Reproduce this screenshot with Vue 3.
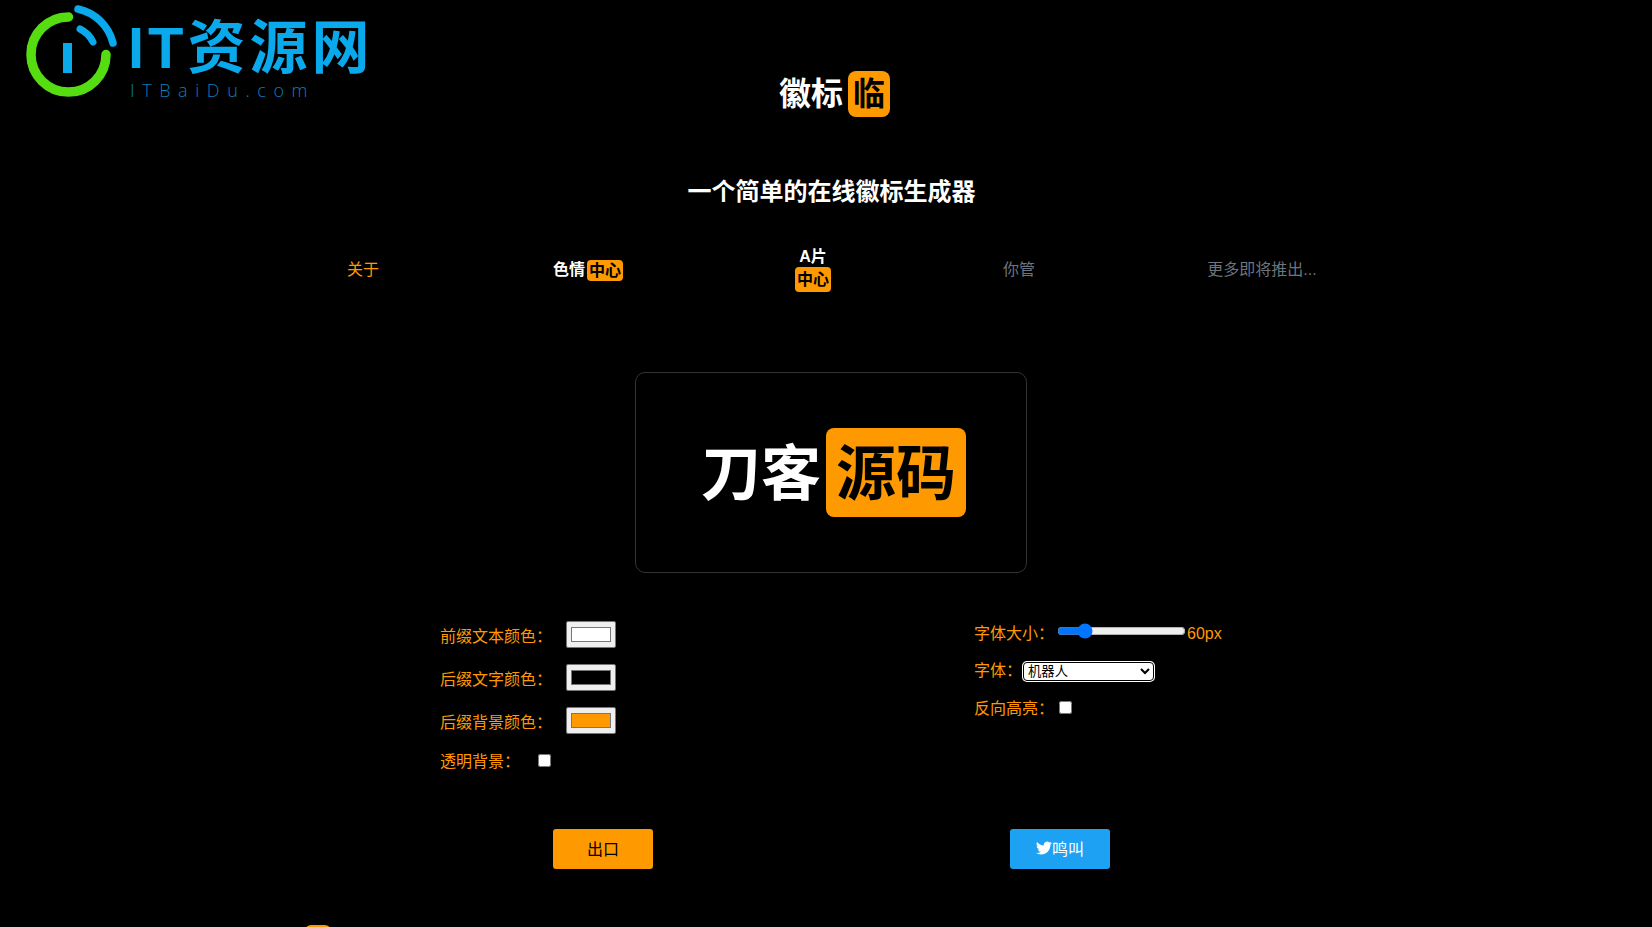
<template>
  <div class="page">
    <a class="site-logo" href="#">
      <svg class="site-mark" width="92" height="100" viewBox="0 0 92 100">
        <path d="M42.5 17 A37.5 37.5 0 1 0 80 54.5" fill="none" stroke="#55dd12" stroke-width="9.5" stroke-linecap="round" />
        <path d="M52 9 A46 46 0 0 1 87 43" fill="none" stroke="#0aa9ec" stroke-width="7.5" stroke-linecap="round" />
        <path d="M54 29 A28 28 0 0 1 67 42" fill="none" stroke="#0aa9ec" stroke-width="7" stroke-linecap="round" />
        <rect x="37" y="43" width="9" height="30" fill="#0aa9ec" />
      </svg>
      <div class="site-name">
        <div class="site-title">IT资源网</div>
        <div class="site-url">ITBaiDu.com</div>
      </div>
    </a>

    <h1 class="brand">徽标<span class="brand-tag">临</span></h1>
    <h2 class="slogan">一个简单的在线徽标生成器</h2>

    <nav class="nav">
      <a class="nav-item active">关于</a>
      <a class="nav-item strong">色情<span class="tag">中心</span></a>
      <a class="nav-item strong stacked">
        <span>A片</span>
        <span class="tag tall">中心</span>
      </a>
      <a class="nav-item muted">你管</a>
      <a class="nav-item muted">更多即将推出...</a>
    </nav>

    <div class="preview">
      <div class="preview-logo" :style="{ fontSize: fontSize + 'px' }">
        <span class="preview-prefix">刀客</span><span class="preview-tag">源码</span>
      </div>
    </div>

    <div class="controls">
      <div class="col col-left">
        <div v-for="c in colors" :key="c.label" class="color-row">
          <label class="color-label">{{ c.label }}：</label>
          <input class="color" type="color" :value="c.value" />
        </div>
        <div class="check-row left-check">
          <label class="check-label">透明背景：</label>
          <input type="checkbox" class="check" />
        </div>
      </div>
      <div class="col col-right">
        <div class="size-row">
          <label>字体大小：</label>
          <input class="range" type="range" min="30" max="200" v-model="fontSize" />
          <span class="size-value">{{ fontSize }}px</span>
        </div>
        <div class="font-row">
          <label>字体：</label>
          <select class="font-select">
            <option>机器人</option>
          </select>
        </div>
        <div class="check-row right-check">
          <label class="check-label">反向高亮：</label>
          <input type="checkbox" class="check" />
        </div>
      </div>
    </div>

    <div class="actions">
      <button class="btn btn-export">出口</button>
      <button class="btn btn-tweet">
        <svg width="16" height="16" viewBox="0 0 24 24" fill="#fff">
          <path d="M23.95 4.57a10 10 0 0 1-2.83.78 4.93 4.93 0 0 0 2.17-2.72 9.9 9.9 0 0 1-3.13 1.19 4.92 4.92 0 0 0-8.38 4.48A13.98 13.98 0 0 1 1.64 3.16a4.92 4.92 0 0 0 1.52 6.57 4.9 4.9 0 0 1-2.23-.61v.06a4.92 4.92 0 0 0 3.95 4.83 4.9 4.9 0 0 1-2.22.08 4.93 4.93 0 0 0 4.6 3.42A9.87 9.87 0 0 1 0 19.54a13.94 13.94 0 0 0 7.55 2.21c9.05 0 14-7.5 14-13.98 0-.21 0-.42-.02-.63a10 10 0 0 0 2.42-2.57z" />
        </svg>鸣叫
      </button>
    </div>

    <div class="footer">
      <span class="footer-tag"></span>
    </div>
  </div>
</template>

<script setup>
import { ref } from 'vue'

const fontSize = ref(60)
const colors = [
  { label: '前缀文本颜色', value: '#ffffff' },
  { label: '后缀文字颜色', value: '#000000' },
  { label: '后缀背景颜色', value: '#ff9900' }
]
</script>

<style>
html, body {
  margin: 0;
  background: #000;
}
body {
  height: 927px;
  overflow: hidden;
}
</style>

<style scoped>
.page {
  position: relative;
  background: #000;
  color: #ff9900;
  font-family: "Liberation Sans", "Noto Sans CJK SC", sans-serif;
  font-size: 16px;
  line-height: 24px;
  padding-top: 71px;
}
.site-logo {
  position: absolute;
  left: 26px;
  top: 0;
  display: flex;
  gap: 10px;
  text-decoration: none;
}
.site-mark {
  display: block;
}
.site-name {
  padding-top: 17px;
}
.site-title {
  color: #0aa9ec;
  font-weight: 700;
  font-size: 58px;
  line-height: 62px;
  letter-spacing: 4px;
}
.site-url {
  color: #0b7fb5;
  font-family: "Open Sans", "Liberation Sans", sans-serif;
  font-weight: 300;
  font-size: 18px;
  line-height: 20px;
  letter-spacing: 7.6px;
  margin-top: 1px;
  padding-left: 2px;
}
.brand {
  margin: 0;
  padding-left: 17px;
  display: flex;
  justify-content: center;
  align-items: center;
  gap: 5px;
  color: #fff;
  font-size: 32px;
  line-height: 46px;
  font-weight: 700;
}
.brand-tag {
  background: #ff9900;
  color: #000;
  border-radius: 8px;
  padding: 0 5px;
}
.slogan {
  margin: 60px 0 0;
  padding-left: 11px;
  text-align: center;
  color: #fff;
  font-size: 24px;
  line-height: 30px;
  font-weight: 700;
}
.nav {
  width: 1148px;
  margin: 37px 0 0 257px;
  height: 52px;
  display: grid;
  grid-template-columns: 212px 238px 212px 200px 286px;
  align-items: center;
  justify-items: center;
}
.nav-item {
  display: flex;
  align-items: center;
}
.active {
  color: #ff9900;
}
.strong {
  color: #fff;
  font-weight: 700;
}
.muted {
  color: #6c757d;
}
.stacked {
  flex-direction: column;
}
.stacked span {
  line-height: 17px;
}
.tag {
  background: #ff9900;
  color: #000;
  border-radius: 4px;
  padding: 0 2px;
  margin-left: 2px;
  line-height: 21px;
}
.stacked .tag {
  line-height: 25px;
  margin: 2px 0 0;
}
.preview {
  width: 392px;
  height: 201px;
  box-sizing: border-box;
  margin: 76px 0 0 635px;
  padding-left: 5px;
  border: 1px solid #333;
  border-radius: 10px;
  display: flex;
  align-items: center;
  justify-content: center;
}
.preview-logo {
  display: flex;
  align-items: center;
  gap: 5px;
  color: #fff;
  font-weight: 700;
  line-height: 85px;
}
.preview-prefix {
  padding-top: 4px;
}
.preview-tag {
  background: #ff9900;
  color: #000;
  border-radius: 8px;
  padding: 4px 10px 0;
}
.controls {
  display: flex;
  margin-top: 48px;
}
.col-left {
  margin-left: 440px;
  width: 534px;
}
.color-row {
  display: flex;
  align-items: center;
  height: 27px;
  margin-bottom: 16px;
}
.color-label {
  width: 126px;
  padding-top: 5px;
}
.color {
  width: 50px;
  height: 27px;
  padding: 1px 2px;
  box-sizing: border-box;
  margin: 0;
  background: #efefef;
  border: 1px solid #767676;
  border-radius: 2px;
}
.check-row {
  display: flex;
  align-items: center;
}
.check {
  margin: 0;
  width: 13px;
  height: 13px;
}
.left-check .check-label {
  width: 98px;
  padding-top: 4px;
}
.left-check {
  margin-top: -4px;
}
.col-right {
  margin-top: -3px;
}
.size-row {
  display: flex;
  align-items: center;
  height: 28px;
}
.size-row label {
  width: 83px;
  padding-top: 4px;
}
.range {
  width: 129px;
  margin: 0 1px 2px 0;
}
.size-value {
  padding-top: 4px;
}
.font-row {
  display: flex;
  align-items: center;
  margin-top: 13px;
}
.font-row label {
  width: 49px;
  white-space: nowrap;
  flex-shrink: 0;
}
.font-select {
  width: 131px;
  height: 19px;
  font-size: 13.33px;
  font-family: "Liberation Sans", "Noto Sans CJK SC", sans-serif;
  border: 1px solid #000;
  border-radius: 4px;
  box-shadow: 0 0 0 1px #fff;
  background: #fff;
  color: #000;
  padding: 0;
}
.right-check {
  margin-top: 11px;
}
.right-check .check-label {
  width: 85px;
  padding-top: 3px;
}
.actions {
  display: flex;
  margin-top: 55px;
  padding-left: 553px;
  gap: 357px;
}
.btn {
  width: 100px;
  height: 40px;
  border: 0;
  border-radius: 3px;
  font-family: inherit;
  font-size: 16px;
  display: flex;
  align-items: center;
  justify-content: center;
  padding: 0 0 2px;
}
.btn-export {
  background: #ff9900;
  color: #000;
}
.btn-tweet {
  background: #1da1f2;
  color: #fff;
}
.footer {
  margin-top: 56px;
  padding-left: 305px;
}
.footer-tag {
  display: inline-block;
  width: 26px;
  height: 30px;
  background: #ff9900;
  border-radius: 6px;
}
</style>
